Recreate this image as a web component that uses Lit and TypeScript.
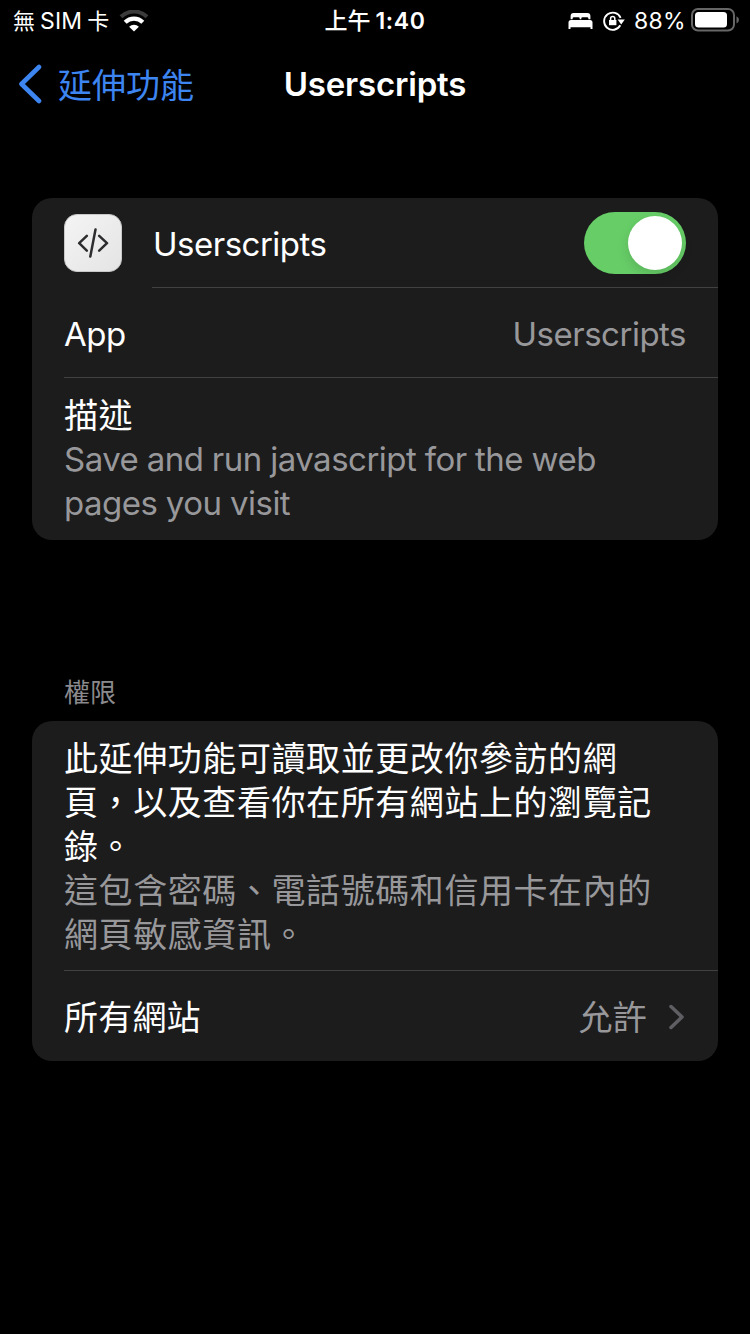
import { LitElement, html, css } from "lit";
import { customElement } from "lit/decorators.js";

@customElement("status-bar")
class StatusBar extends LitElement {
  static styles = css`
    :host { display: grid; grid-template-columns: 1fr auto 1fr; height: 40px; align-items: center; font-size: 22px; line-height: 40px; white-space: nowrap; }
    .left { display: flex; align-items: center; padding: 1px 0 0 13px; }
    .carrier { display: flex; gap: 5px; }
    .sim { font-size: 23px; letter-spacing: 0.2px; }
    .wifi { margin-left: 10px; }
    .time { display: flex; gap: 5px; padding-top: 1px; font-weight: 600; font-size: 23px; letter-spacing: 0.6px; }
    .period { font-weight: 500; letter-spacing: 0; }
    .right { display: flex; align-items: center; justify-content: flex-end; padding: 0 10px 0 0; }
    .bed { margin-top: 1px; }
    .lock { margin-left: 10px; }
    .percent { margin-left: 9px; padding-top: 1px; font-size: 23px; letter-spacing: 0.3px; }
    .battery { margin: -1px 0 0 5px; }
    svg { display: block; }
  `;
  render() {
    return html`
      <div class="left">
        <span class="carrier"><span>無</span><span class="sim">SIM</span><span>卡</span></span>
        <svg class="wifi" width="30" height="22" viewBox="0 0 30 22" fill="none">
          <path d="M2 6.800A18.600 18.600 0 0 1 28 6.800" stroke="#3b3b3b" stroke-width="4"/>
          <path d="M6.200 12.200A12.500 12.500 0 0 1 23.800 12.200" stroke="#fff" stroke-width="4.200"/>
          <path d="M15 21.400L10.100 16.700A7 7 0 0 1 19.900 16.700Z" fill="#fff"/>
        </svg>
      </div>
      <span class="time"><span class="period">上午</span><span>1:40</span></span>
      <div class="right">
        <svg class="bed" width="25" height="18" viewBox="0 0 25 18" fill="#fff">
          <path d="M2.600 7.200V4A3 3 0 0 1 5.600 1H19.400A3 3 0 0 1 22.400 4V7.200H20.400V6.600A1.300 1.300 0 0 0 19.100 5.300H14.600A1.300 1.300 0 0 0 13.300 6.600V7.200H11.700V6.600A1.300 1.300 0 0 0 10.400 5.300H5.900A1.300 1.300 0 0 0 4.600 6.600V7.200Z"/>
          <path d="M0.500 17V10.500A2.500 2.500 0 0 1 3 8H22A2.500 2.500 0 0 1 24.500 10.500V17H22.500V15.200H2.500V17Z"/>
        </svg>
        <svg class="lock" width="22" height="20" viewBox="0 0 22 20">
          <path d="M17.300 14.300A8.600 8.600 0 1 1 17.600 6.800" fill="none" stroke="#fff" stroke-width="1.900"/>
          <path d="M14.600 8.600H21.800L18.200 13.400Z" fill="#fff"/>
          <path d="M6 9H13.400V14.200H6Z" fill="#fff"/>
          <path d="M7.600 9.500V7.500A2.100 2.100 0 0 1 11.800 7.500V9.500" fill="none" stroke="#fff" stroke-width="1.500"/>
        </svg>
        <span class="percent">88%</span>
        <svg class="battery" width="49" height="24" viewBox="0 0 49 24">
          <rect x="1" y="1" width="42" height="21.500" rx="6" fill="none" stroke="#666" stroke-width="2"/>
          <rect x="4" y="4" width="32" height="15.500" rx="3.500" fill="#fff"/>
          <path d="M45.500 8.200Q48 9.300 48 11.800T45.500 15.400Z" fill="#666"/>
        </svg>
      </div>
    `;
  }
}

@customElement("nav-bar")
class NavBar extends LitElement {
  static styles = css`
    :host { display: grid; grid-template-columns: 1fr auto 1fr; height: 88px; align-items: center; line-height: 44px; font-size: 33px; }
    .back { display: flex; align-items: center; padding-left: 18px; color: #3d85f0; }
    .label { margin-left: 16px; padding-top: 3px; font-size: 34px; }
    .title { font-weight: 600; letter-spacing: -0.18px; color: #fff; }
  `;
  render() {
    return html`
      <div class="back">
        <svg width="24" height="40" viewBox="0 0 24 40" fill="none">
          <path d="M21 3L3.500 20L21 37" stroke="currentColor" stroke-width="4.600" stroke-linecap="round" stroke-linejoin="round"/>
        </svg>
        <span class="label">延伸功能</span>
      </div>
      <div class="title">Userscripts</div>
    `;
  }
}

@customElement("toggle-switch")
class ToggleSwitch extends LitElement {
  static styles = css`
    :host { display: flex; justify-content: flex-end; box-sizing: border-box; width: 102px; height: 62px; padding: 4px; border-radius: 31px; background: #67ce67; }
    .knob { width: 54px; height: 54px; border-radius: 50%; background: #fff; box-shadow: 0 5px 12px rgba(0, 0, 0, 0.13); }
  `;
  render() {
    return html`<div class="knob"></div>`;
  }
}

@customElement("app-root")
class AppRoot extends LitElement {
  static styles = css`
    :host { display: block; box-sizing: border-box; width: 750px; height: 1334px; overflow: hidden; background: #000; color: #fff; font-family: Inter, "Noto Sans CJK TC", sans-serif; font-size: 33px; line-height: 44px; }
    .content { padding: 70px 32px 0; }
    .card { width: 686px; border-radius: 20px; background: #1c1c1d; overflow: hidden; }
    .row { display: flex; align-items: center; box-sizing: border-box; height: 90px; margin-left: 32px; padding-right: 32px; }
    .line { border-bottom: 1px solid #414143; }
    .ext { margin-left: 0; padding-left: 32px; }
    .body { display: flex; flex: 1; align-items: center; justify-content: space-between; box-sizing: border-box; height: 90px; margin: 0 -32px 0 30px; padding-right: 32px; }
    .icon { display: block; flex: none; }
    .latin { letter-spacing: -0.5px; word-spacing: -0.4px; }
    .row .latin { padding-top: 2px; }
    .body .latin { padding-left: 1px; }
    .cjk { font-size: 34px; letter-spacing: 0.58px; }
    .row.cjk { padding-top: 4px; letter-spacing: 0.2px; }
    .muted { color: #98989b; }
    .text { margin-left: 32px; white-space: nowrap; }
    .desc { padding: 16px 0 14px; }
    .desc .latin { margin-top: -1px; padding-bottom: 1px; }
    .perm { padding: 16px 0 13px; }
    .section { height: 44px; margin: 131px 0 6px 32px; font-size: 26px; color: #8a8a8e; }
    .end { display: flex; align-items: center; margin-left: auto; }
    .chevron { display: block; margin: -2px 0 0 21px; }
  `;
  render() {
    return html`
      <status-bar></status-bar>
      <nav-bar></nav-bar>
      <main class="content">
        <section class="card">
          <div class="row ext">
            <svg class="icon" width="58" height="58" viewBox="0 0 58 58">
              <defs><linearGradient id="g" x1="0" y1="0" x2="1" y2="1"><stop offset="0" stop-color="#f4f4f4"/><stop offset="1" stop-color="#e4e4e4"/></linearGradient></defs>
              <rect x="0.500" y="0.500" width="57" height="57" rx="12.500" fill="url(#g)" stroke="#c8c8c8"/>
              <path d="M22.800 21.900L15.200 29.200L22.800 36.700M35.200 21.900L43 29.200L35.200 36.700M31.500 15.500L26.300 42.600" fill="none" stroke="#2d2d2f" stroke-width="2.500" stroke-linecap="round" stroke-linejoin="round"/>
            </svg>
            <div class="body line"><span class="latin">Userscripts</span><toggle-switch></toggle-switch></div>
          </div>
          <div class="row line"><span class="latin">App</span><span class="end latin muted">Userscripts</span></div>
          <div class="text desc">
            <div class="cjk">描述</div>
            <div class="latin muted">Save and run javascript for the web<br>pages you visit</div>
          </div>
        </section>
        <div class="section">權限</div>
        <section class="card">
          <div class="text perm line cjk">
            <div>此延伸功能可讀取並更改你參訪的網<br>頁，以及查看你在所有網站上的瀏覽記<br>錄。</div>
            <div class="muted">這包含密碼、電話號碼和信用卡在內的<br>網頁敏感資訊。</div>
          </div>
          <div class="row cjk">
            <span>所有網站</span>
            <span class="end muted">允許
              <svg class="chevron" width="18" height="28" viewBox="0 0 18 28" fill="none"><path d="M3 3.500L14 14L3 24.500" stroke="#5f5f63" stroke-width="3.500" stroke-linecap="round" stroke-linejoin="round"/></svg>
            </span>
          </div>
        </section>
      </main>
    `;
  }
}
